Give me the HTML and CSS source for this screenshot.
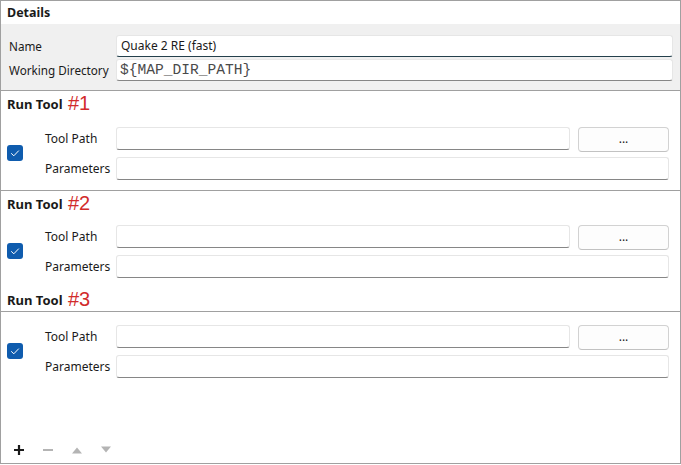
FILE: index.html
```html
<!DOCTYPE html>
<html>
<head>
<meta charset="utf-8">
<link rel="stylesheet" href="styles.css">
</head>
<body>
<div class="panel">
  <div class="details-title">Details</div>
  <div class="details-body">
    <div class="lbl">Name</div>
    <div class="field focused">Quake 2 RE (fast)</div>
    <div class="lbl">Working Directory</div>
    <div class="field mono">${MAP_DIR_PATH}</div>
  </div>

  <div class="sec-head">Run Tool <span class="num">#1</span></div>
  <div class="sec-body sep">
    <div class="check"><svg viewBox="0 0 16 16" width="16" height="16"><path d="M4.2 8.3 L6.8 10.8 L11.8 5.6" fill="none" stroke="#fff" stroke-width="1"/></svg></div>
    <div class="rows">
      <div class="row"><div class="rlbl">Tool Path</div><div class="field grow"></div><div class="btn">...</div></div>
      <div class="row"><div class="rlbl">Parameters</div><div class="field grow"></div></div>
    </div>
  </div>

  <div class="sec-head">Run Tool <span class="num">#2</span></div>
  <div class="sec-body short">
    <div class="check"><svg viewBox="0 0 16 16" width="16" height="16"><path d="M4.2 8.3 L6.8 10.8 L11.8 5.6" fill="none" stroke="#fff" stroke-width="1"/></svg></div>
    <div class="rows">
      <div class="row"><div class="rlbl">Tool Path</div><div class="field grow"></div><div class="btn">...</div></div>
      <div class="row"><div class="rlbl">Parameters</div><div class="field grow"></div></div>
    </div>
  </div>

  <div class="sec-head sep">Run Tool <span class="num">#3</span></div>
  <div class="sec-body third">
    <div class="check"><svg viewBox="0 0 16 16" width="16" height="16"><path d="M4.2 8.3 L6.8 10.8 L11.8 5.6" fill="none" stroke="#fff" stroke-width="1"/></svg></div>
    <div class="rows">
      <div class="row"><div class="rlbl">Tool Path</div><div class="field grow"></div><div class="btn">...</div></div>
      <div class="row"><div class="rlbl">Parameters</div><div class="field grow"></div></div>
    </div>
  </div>

  <div class="spacer"></div>
  <div class="toolbar">
    <svg class="tb" viewBox="0 0 12 12" width="12" height="12"><path d="M6 1 V11 M1 6 H11" stroke="#1a1a1a" stroke-width="2.2"/></svg>
    <svg class="tb" viewBox="0 0 12 12" width="12" height="12"><path d="M1 6 H11" stroke="#b4b4b4" stroke-width="2"/></svg>
    <svg class="tb" viewBox="0 0 12 12" width="12" height="12"><path d="M1 9.5 L6 3.5 L11 9.5 Z" fill="#b4b4b4"/></svg>
    <svg class="tb" viewBox="0 0 12 12" width="12" height="12"><path d="M1 2.5 L6 8.5 L11 2.5 Z" fill="#b4b4b4"/></svg>
  </div>
</div>
</body>
</html>
```
FILE: styles.css
```css
html, body {
  margin: 0;
  padding: 0;
  background: #ffffff;
}
body {
  font-family: "Noto Sans", "Open Sans", sans-serif;
  font-size: 12px;
  color: #1a1a1a;
}
.panel {
  width: 679px;
  height: 462px;
  border: 1px solid #a0a0a0;
  display: flex;
  flex-direction: column;
  background: #fff;
}
.details-title {
  height: 23px;
  line-height: 23px;
  padding-left: 6px;
  font-weight: 700;
  font-size: 12.5px;
}
.details-body {
  background: #f0f0f0;
  padding: 11px 7px 9px 8px;
  border-bottom: 1px solid #a0a0a0;
  display: grid;
  grid-template-columns: 107px 1fr;
  row-gap: 2px;
  align-items: center;
}
.lbl {
  white-space: nowrap;
  font-size: 11.7px;
}
.field {
  box-sizing: border-box;
  height: 22px;
  background: #fff;
  border: 1px solid #e6e6e6;
  border-bottom: 1px solid #868686;
  border-radius: 3px;
  padding: 0 4px;
  line-height: 20px;
}
.field.focused {
  border-bottom-color: #24404c;
}
.field.mono {
  font-family: "Liberation Mono", "DejaVu Sans Mono", monospace;
  font-size: 14.6px;
  color: #4a4a4a;
  padding-left: 3px;
}
.sec-head {
  height: 24px;
  line-height: 24px;
  padding-left: 6px;
  font-weight: 700;
  font-size: 13px;
  white-space: nowrap;
}
.sec-head.sep {
  border-bottom: 1px solid #a0a0a0;
}
.num {
  font-family: "Liberation Sans", Arial, sans-serif;
  font-weight: 400;
  font-size: 20px;
  color: #d22b2b;
  vertical-align: -1px;
  margin-left: 2px;
}
.sec-body {
  display: flex;
  align-items: center;
  padding: 12px 11px 10px 6px;
}
.sec-body.sep {
  border-bottom: 1px solid #a0a0a0;
}
.sec-body.short {
  padding-top: 10px;
  padding-bottom: 9px;
}
.sec-body.third {
  padding-top: 13px;
}
.check {
  width: 16px;
  height: 16px;
  border-radius: 3px;
  background: #0f5cae;
  flex: none;
  margin-top: -2px;
}
.check svg {
  display: block;
}
.rows {
  flex: 1;
  margin-left: 22px;
  display: flex;
  flex-direction: column;
  gap: 5px;
}
.row {
  display: flex;
  align-items: flex-start;
  gap: 8px;
}
.row:first-child {
  height: 25px;
}
.rlbl {
  width: 63px;
  height: 23px;
  line-height: 23px;
  white-space: nowrap;
}
.grow {
  flex: 1;
  height: 23px;
}
.btn {
  box-sizing: border-box;
  width: 91px;
  height: 25px;
  border: 1px solid #d2d2d2;
  border-bottom-color: #c2c2c2;
  border-radius: 4px;
  background: #fdfdfd;
  text-align: center;
  line-height: 22px;
  font-size: 12px;
}
.spacer {
  flex: 1;
}
.toolbar {
  display: flex;
  gap: 17px;
  padding: 0 0 7px 12px;
  align-items: center;
}
.tb {
  display: block;
}
```
